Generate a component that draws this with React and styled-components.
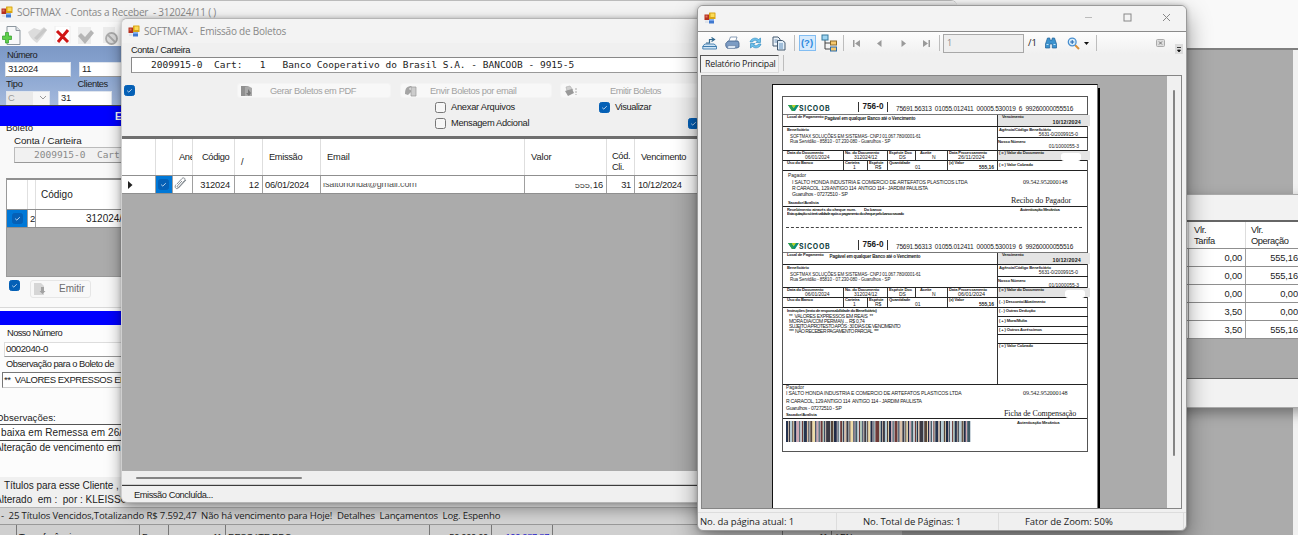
import React from "react";
import styled, { createGlobalStyle, css } from "styled-components";

const Global = createGlobalStyle`
  * { box-sizing: border-box; }
  body { margin: 0; background: #ababab; }
`;

const sans = `"Liberation Sans", Arial, sans-serif`;
const ui = `"Open Sans", "Noto Sans", sans-serif`;
const mono = `"DejaVu Sans Mono", monospace`;
const serif = `"Liberation Serif", serif`;

/* ---------- shared parts ---------- */
const Desktop = styled.div`
  position: relative; width: 1298px; height: 535px; overflow: hidden;
  background: #ababab; font-family: ${sans}; color: #1c1c1c;
`;
const T = styled.div`
  white-space: pre; flex: none;
  font-family: ${(p) => p.$f || sans};
  font-size: ${(p) => p.$s || 9.3}px;
  font-weight: ${(p) => (p.$b ? 700 : 400)};
  line-height: ${(p) => p.$h || 12}px;
  height: ${(p) => p.$h || 12}px;
  letter-spacing: ${(p) => p.$ls ?? (p.$f || p.$s ? 0 : -0.3)}px;
  margin: ${(p) => p.$mt || 0}px ${(p) => p.$mr || 0}px 0 ${(p) => p.$x || 0}px;
  color: ${(p) => p.$c || "inherit"};
  text-align: ${(p) => p.$a || "left"};
`;
const Line = styled.div`
  display: flex; flex: none; align-items: ${(p) => p.$al || "center"};
  height: ${(p) => p.$h}px; margin-top: ${(p) => p.$mt || 0}px;
  padding-left: ${(p) => p.$x || 0}px; gap: ${(p) => p.$gap || 0}px;
`;
const Window = styled.section`
  position: absolute; display: flex; flex-direction: column; overflow: hidden;
  background: #f0f0f0;
`;
const Check = styled.span`
  flex: none; display: flex; width: 11px; height: 11px; border-radius: 2.5px;
  margin: ${(p) => p.$mt || 0}px 0 0 ${(p) => p.$x || 0}px;
  background: ${(p) => (p.$on ? "#0560b6" : "#f6f6f6")};
  border: 1px solid ${(p) => (p.$on ? "#0560b6" : "#777")};
`;
const Tick = (p) => (
  <Check $on {...p}>
    <svg width="9" height="9" viewBox="0 0 9 9"><path d="M2.2 4.7 3.8 6.1 6.8 3.2" fill="none" stroke="#c9def2" strokeWidth=".9" /></svg>
  </Check>
);
const AppIcon = () => (
  <svg width="12" height="12" viewBox="0 0 12 12">
    <rect x=".5" y="2.5" width="5" height="5.500" fill="#b5301f" /><rect x="1.5" y="3.5" width="2" height="2" fill="#e0735c" />
    <rect x="5" y="0.5" width="6.5" height="6.5" rx=".5" fill="#d9a514" /><rect x="6.5" y="1.5" width="4" height="3.5" fill="#fbdc58" />
    <rect x="5" y="7.5" width="5" height="4" fill="#3f78cf" /><rect x="5" y="7.5" width="5" height="1.3" fill="#83aef0" />
    <rect x="1" y="8.5" width="3.5" height="2.5" fill="#dfe3ea" />
  </svg>
);

/* ---------- outer frame behind the windows ---------- */
const ShellTop = styled.div`
  height: 50px; background: #f9f9f9; border-bottom: 2px solid #808080;
`;
const ShellScroll = styled.div`
  margin-left: auto; width: 5px; height: 485px; background: #f1f1f1;
`;
const LowerGrid = styled.div`
  position: absolute; left: 0; top: 524px; width: 902px; height: 11px; overflow: hidden;
  display: flex; background: #cfcfcf; border-top: 1px solid #999;
`;
const LowerCell = styled.div`
  flex: none; width: ${(p) => p.$w}px; border-right: 1px solid #777;
  overflow: hidden; display: flex; justify-content: ${(p) => (p.$r ? "flex-end" : "flex-start")};
`;

/* ---------- Contas a Receber ---------- */
const MainWindow = styled(Window)`
  left: 0; top: 0; width: 957px; height: 525px; background: #fcfcfc;
  border-radius: 0 6px 0 0; border-top: 1px solid #bbb;
`;
const TitleRow = styled.div`
  display: flex; align-items: center; flex: none; height: ${(p) => p.$h}px;
  padding-left: ${(p) => p.$x}px; gap: 4px; background: #f3f3f3; color: #888;
`;
const MainTools = styled.div`
  flex: none; height: 23px; background: #fafafa; padding-left: 2px; display: flex; align-items: flex-end;
`;
const BlueForm = styled.div`
  flex: none; height: 60px; overflow: hidden; border-bottom: 1px solid #444;
  background: linear-gradient(#7c98c6, #88a4d0 40%, #a4b9dc);
`;
const Field = styled.div`
  display: flex; align-items: center; flex: none; overflow: hidden;
  width: ${(p) => p.$w}px; height: ${(p) => p.$h || 15}px; padding-left: ${(p) => p.$p ?? 3}px;
  margin-left: ${(p) => p.$x || 0}px;
  background: ${(p) => p.$bg || "#fff"}; border: 1px solid ${(p) => p.$bc || "#dfe5ee"};
  border-bottom-color: ${(p) => p.$bb || "#999"};
`;
const BlueBar = styled.div`
  flex: none; height: ${(p) => p.$h}px; background: #0000ff; padding: 5px 0 0 115px;
`;
const BoletoPanel = styled.div`
  flex: none; height: 182px; margin-bottom: 3px; overflow: hidden; background: #f9f9f9; border-bottom: 1px solid #d9d9d9;
`;
const SmallGrid = styled.div`
  width: 200px; height: 99px; margin: 15px 0 0 6px; background: #ababab; border: 1px solid #999; border-top: 2px solid #909090;
`;
const GridRow = styled.div`
  display: flex; height: ${(p) => p.$h}px; background: #fff; border-bottom: 1px solid #8f8f8f;
`;
const GridCell = styled.div`
  flex: none; display: flex; align-items: ${(p) => p.$al || "center"}; overflow: hidden;
  width: ${(p) => p.$w}px; padding: ${(p) => p.$p || "0 0 0 5px"};
  justify-content: ${(p) => (p.$r ? "flex-end" : "flex-start")};
  border-right: 1px solid ${(p) => p.$bc || "#a0a0a0"};
  background: ${(p) => p.$bg || "transparent"};
`;
const SoftButton = styled.div`
  flex: none; display: flex; align-items: center; width: ${(p) => p.$w}px; height: ${(p) => p.$h || 15}px;
  margin-left: ${(p) => p.$x || 0}px; padding-left: 3px;
  background: #f8f8f8; border: 1px solid ${(p) => p.$bc || "#f4f4f4"}; border-radius: 3px; color: ${(p) => p.$c || "#a2a2a2"};
`;
const NotesBox = styled.div`
  flex: none; height: 17px; border-top: 1px solid #555; border-bottom: 1px solid #444; background: #fff;
`;
const FooterInfo = styled.div`flex: none; height: 30px; background: #f0f0f0; padding-top: 3px;`;
const MainStatus = styled.div`
  flex: 1; background: #d4d4d4; border-top: 1px solid #b5b5b5; border-bottom: 1px solid #999; padding-top: 1px;
`;

/* ---------- Emissão de Boletos ---------- */
const EmitWindow = styled(Window)`
  left: 121px; top: 18px; width: 640px; height: 485px; border-radius: 6px; border: 1px solid #b5b5b5; border-left-color: #cfcfcf;
  box-shadow: 0 6px 16px rgba(0, 0, 0, 0.38), 0 0 4px rgba(0, 0, 0, 0.2);
`;
const EmitGrid = styled.div`
  flex: none; height: 350px; display: flex; flex-direction: column; background: #ababab;
  border-top: 3px solid #6f6f6f; border-left: 1px solid #222; border-bottom: 1px solid #3c3c3c; margin-left: -1px;
`;
const HScroll = styled.div`
  margin-top: auto; height: 14px; background: #efefef; padding: 6px 0 0 14px; border-bottom: 1px solid #ccc;
`;
const HThumb = styled.div`width: 166px; height: 2px; border-radius: 1px; background: #858585;`;
const Masked = styled.div`height: 6px; overflow: hidden; opacity: 0.8; display: flex;`;
const HalfMask = styled.div`height: 5px; overflow: hidden; margin-top: 3px; opacity: 0.8;`;

const emitCols = [
  [34], [17], [20, "Ane", 6], [42, "Código", 9], [28, "/", 6, "10px 0 0"], [58, "Emissão", 6],
  [204, "Email", 6], [82, "Valor", 6], [28, "Cód.\nCli.", 5, "12px 0 0"], [80, "Vencimento", 6],
];

/* ---------- Títulos grid on the right ---------- */
const FeesWindow = styled(Window)`
  left: 1000px; top: 194px; width: 320px; height: 214px; background: #f2f2f2; border: 1px solid #aaa;
  box-shadow: 0 5px 12px rgba(0, 0, 0, 0.35); padding: 25px 0 28px 180px;
`;
const FeesGrid = styled.div`
  flex: 1; background: #ababab; border-top: 2px solid #666; border-bottom: 1px solid #666;
`;

/* ---------- report viewer ---------- */
const ReportWindow = styled(Window)`
  left: 697px; top: 5px; width: 490px; height: 526px; border-radius: 6px; border: 1px solid #9a9a9a;
  box-shadow: 0 10px 24px rgba(0, 0, 0, 0.42), 0 0 5px rgba(0, 0, 0, 0.25);
`;
const ReportTitle = styled.div`
  flex: none; display: flex; align-items: center; height: 26px; padding: 0 15px 2px 6px;
  background: #f3f3f3; border-bottom: 1px solid #8b8b8b;
`;
const Caption = styled.div`display: flex; gap: 30px; margin-left: auto;`;
const ReportTools = styled.div`
  flex: none; display: flex; align-items: center; height: 22px; padding-left: 4px; background: linear-gradient(#fdfdfd, #f0f0f0);
`;
const Slot = styled.span`
  flex: none; display: flex; justify-content: center; align-items: center; width: ${(p) => p.$w}px; height: 20px;
  margin-left: ${(p) => p.$x || 0}px;
`;
const Sep = styled.span`flex: none; width: 1px; height: 16px; background: #bdbdbd; margin: 0 ${(p) => p.$m ?? 3}px;`;
const PageBox = styled.div`
  flex: none; width: 81px; height: 19px; background: #efefef; border: 1px solid #a8a8a8; margin-left: 3px; padding: 0 0 0 3px;
`;
const Overflow = styled.span`
  flex: none; align-self: flex-end; display: flex; width: 8px; height: 10px; margin-left: 10px; background: #dcdcdc;
`;
const TabRow = styled.div`flex: none; display: flex; height: 21px; padding: 1px 0 0 2px;`;
const Tab = styled.div`
  width: 79px; height: 18px; border: 1px solid #dcdcdc; border-top-color: #555; border-left-color: #555; background: #f3f3f3;
  padding: 1px 0 0 4px; margin-right: 4px;
`;
const Viewer = styled.div`
  flex: none; display: flex; width: 481px; height: 434px; margin: 0 0 3px 3px; background: #ababab;
  border: 1px solid #858585; padding-left: 70px; overflow: hidden;
`;
const Paper = styled.div`
  width: 326px; height: 430px; margin-top: 8px; background: #fff; border-left: 1px solid #111; border-top: 1px solid #111;
  border-right: 1px solid #777; box-shadow: 2px 4px 0 #000; padding: 11px 0 0 9px;
`;
const VScroll = styled.div`margin-left: auto; width: 14px; background: #f0f0f0; padding: 14px 0 0 6px;`;
const VThumb = styled.div`width: 2px; height: 366px; border-radius: 1px; background: #858585;`;
const ReportStatus = styled.div`
  flex: 1; display: flex; border-top: 1px solid #ddd; 
`;
const StatusCell = styled.div`width: ${(p) => p.$w}px; padding: 1px 0 0 ${(p) => p.$p}px; border-right: 1px solid #ddd;`;

/* ---------- payment slip ---------- */
const Slip = styled.div`
  width: 306px; height: 356px; border: 1px solid #555; display: flex; flex-direction: column; color: #1a1a1a;
`;
const SlipHead = styled.div`
  flex: none; display: flex; align-items: flex-end; height: ${(p) => p.$h}px; border-bottom: 1px solid #777; padding: 0 0 2px 5px;
`;
const LogoName = styled.div`width: 59px;`;
const BankCode = styled.div`
  width: 30px; height: 10px; border-left: 1px solid #333; border-right: 1px solid #333; display: flex;
  justify-content: center; padding-top: 1px;
`;
const SlipRow = styled.div`
  flex: none; display: flex; height: ${(p) => p.$h}px; border-bottom: 1px solid #222;
`;
const Cell = styled.div`
  flex: none; width: ${(p) => p.$w}px; height: ${(p) => (p.$ch ? p.$ch + "px" : "auto")};
  padding-left: ${(p) => p.$p ?? 1}px; overflow: ${(p) => (p.$v ? "visible" : "hidden")};
  ${(p) => p.$l && css`border-left: 1px solid #333;`}
  ${(p) => p.$bb && css`border-bottom: 1px solid #222;`}
  ${(p) => p.$g && css`background: #e4e4e4;`}
`;
const Cut = styled.div`flex: none; height: 1px; margin: 11px 5px 0 3px; border-top: 1px dashed #444;`;
const Blank = styled.div`width: ${(p) => p.$w}px; height: 8px; margin: -2px 0 0 ${(p) => p.$x}px; background: #fff; border-radius: 3px;`;

const Tiny = ({ children, ...p }) => <T $s={4.1} $b $h={4} $ls={-0.14} {...p}>{children}</T>;
const Val = ({ children, ...p }) => <T $s={5} $h={5} $ls={-0.05} {...p}>{children}</T>;

const Sicoob = () => (
  <svg width="11" height="8" viewBox="0 0 11 8">
    <path d="M0 1h4l1.500 3L7 1h4L7 7H4z" fill="#0b8f7a" /><path d="M3.500 1H8L5.700 4.600z" fill="#b5cf2a" /><path d="M0 1h3l3 6H4z" fill="#2f9d4c" />
  </svg>
);
const Head = ({ h }) => (
  <SlipHead $h={h}>
    <Sicoob />
    <LogoName><T $s={7} $b $h={7} $ls={0.7} $c="#13433f" $f={`Inter, ${sans}`}>SICOOB</T></LogoName>
    <BankCode><T $s={8.2} $b $h={8} $ls={0}>756-0</T></BankCode>
    <T $s={6.5} $h={7} $x={8} $ls={-0.21}>75691.56313  01055.012411  00005.530019  6  99260000055516</T>
  </SlipHead>
);
const Beneficiary = ({ h2, x, split, third, last }) => (
  <>
    <SlipRow $h={12}>
      <Cell $w={214} $p={4}>
        <Line $h={8} $al="flex-start">
          <Tiny $ls={-0.18}>Local de Pagamento</Tiny>
          <T $s={4.5} $b $h={6} $ls={-0.18} $x={x} $mt={1}>Pagável em qualquer Banco até o Vencimento</T>
        </Line>
      </Cell>
      <Cell $w={93} $l $g $v $p={4}>
        <Tiny>Vencimento</Tiny>
        <T $s={5.4} $b $h={6} $a="right" $mr={9} $ls={0.15}>10/12/2024</T>
      </Cell>
    </SlipRow>
    <SlipRow $h={h2}>
      <Cell $w={214} $p={4}>
        <Tiny $mt={1}>Beneficiário</Tiny>
        <T $s={4.5} $h={5} $mt={1.5} $x={3} $ls={-0.1}>SOFTMAX SOLUÇÕES EM SISTEMAS- CNPJ 01.067.780/0001-61</T>
        <T $s={4.5} $h={5} $x={3} $ls={-0.1}>Rua Servidão - 85810 - 07.230-080 - Guarulhos - SP</T>
      </Cell>
      <Cell $w={91} $l $p={0}>
        <Cell $ch={split} $w={91} $bb>
          <Tiny $mt={1}>Agência/Código Beneficiário</Tiny>
          <Val $s={4.9} $h={5} $a="right" $mr={11}>5631-0/2009915-0</Val>
        </Cell>
        <Tiny $mt={1.5}>Nosso Número</Tiny>
        <Val $a="right" $mr={9}>01/1000055-3</Val>
      </Cell>
    </SlipRow>
    <SlipRow $h={10}>
      <Cell $w={60} $p={4}><Tiny>Data do Documento</Tiny><Val $x={18}>06/01/2024</Val></Cell>
      <Cell $w={44} $l><Tiny>No. do Documento</Tiny><Val $x={9}>312024/12</Val></Cell>
      <Cell $w={28} $l><Tiny>Espécie Doc</Tiny><Val $x={10}>DS</Val></Cell>
      <Cell $w={32} $l $p={4}><Tiny>Aceite</Tiny><Val $x={12}>N</Val></Cell>
      <Cell $w={50} $l><Tiny>Data Processamento</Tiny><Val $x={9} $s={5.5}>{third}</Val></Cell>
      <Cell $w={93} $l $g $v><Tiny>( = ) Valor do Documento</Tiny><Blank $w={20} $x={last ? 66 : 62} /></Cell>
    </SlipRow>
    <SlipRow $h={10}>
      <Cell $w={60} $p={4}><Tiny>Uso do Banco</Tiny></Cell>
      <Cell $w={24} $l><Tiny>Carteira</Tiny><Val $x={8}>1</Val></Cell>
      <Cell $w={20} $l><Tiny>Espécie</Tiny><Val $x={6}>R$</Val></Cell>
      <Cell $w={60} $l><Tiny>Quantidade</Tiny><Val $x={26}>01</Val></Cell>
      <Cell $w={50} $l><Tiny>(x) Valor</Tiny><Val $b $a="right" $mr={3}>555,16</Val></Cell>
      <Cell $w={91} $l><Tiny $mt={1.5}>{last ? "( - ) Desconto/Abatimento" : "( = ) Valor Cobrado"}</Tiny></Cell>
    </SlipRow>
  </>
);
const Cnpj = (p) => <T $f={serif} $s={6.1} $h={6} $ls={-0.08} {...p}>09.542.952000148</T>;
const Address = ({ x, g1, g2 }) => (
  <>
    <T $s={5.1} $h={6} $x={x} $mt={g1 ? 0 : 1} $ls={-0.15}>I SALTO HONDA INDUSTRIA E COMERCIO DE ARTEFATOS PLASTICOS LTDA</T>
    <T $s={5.1} $h={6} $x={x} $mt={g1} $ls={-0.29}>R CARACOL, 129 ANTIGO 114  ANTIGO 114 - JARDIM PAULISTA</T>
    <T $s={5.1} $h={6} $x={x} $mt={g2} $ls={-0.26}>Guarulhos - 07272510 - SP</T>
  </>
);

const stripes = "2113112412113211241311221141213112211321141122131121132111421123112211311421121322111241311212113214112113122114112231".split("");
const tones = ["#26334e", "#d9c0a8", "#3b3a44", "#b5cdd6", "#55443a", "#efdca8", "#1f2b47", "#cfa9b4", "#3f5a66", "#d5dfe6", "#6d3a38", "#aac4b8"];
const Barcode = () => {
  const widths = stripes.map((s, i) => (i % 2 ? +s * 0.75 : +s + 0.4));
  const total = widths.reduce((a, b) => a + b, 0);
  let x = 0;
  return (
    <svg width="185" height="21" viewBox={`0 0 ${total} 20`} preserveAspectRatio="none">
      {widths.map((w, i) => {
        const r = <rect key={i} x={x} y="0" width={w + 0.05} height="20" fill={tones[i % 12]} />;
        x += w;
        return r;
      })}
    </svg>
  );
};

const PaymentSlip = () => (
  <Slip>
    <Head h={18} />
    <Beneficiary h2={24} x={1} split={11} third="26/11/2024" />
    <SlipRow $h={36}>
      <Cell $w={226} $p={5}>
        <T $s={4.8} $h={5} $mt={1.5}>Pagador</T>
        <Address x={4} />
        <Tiny $mt={4}>Sacador/Avalista</Tiny>
      </Cell>
      <Cell $w={78} $p={2}>
        <Cnpj $mt={8} $x={12} />
        <T $f={serif} $s={8} $h={10} $mt={11} $ls={-0.05}>Recibo do Pagador</T>
      </Cell>
    </SlipRow>
    <Line $h={8} $al="flex-start" $x={4} $mt={1}>
      <Cell $w={233} $p={0}>
        <Tiny>{"Recebimento através do cheque num.        Do banco"}</Tiny>
        <Tiny $ls={-0.52}>Esta quitação só terá validade após o pagamento do cheque pelo banco sacado</Tiny>
      </Cell>
      <Tiny $ls={-0.28}>Autenticação Mecânica</Tiny>
    </Line>
    <Cut />
    <Head h={25} />
    <Beneficiary h2={23} x={6} split={12} third="06/01/2024" last />
    <SlipRow $h={77}>
      <Cell $w={214} $p={4}>
        <Tiny $mt={1} $ls={-0.3}>Instruções (texto de responsabilidade do Beneficiário)</Tiny>
        <Val $x={2} $mt={1} $ls={-0.3}>**  VALORES EXPRESSOS EM REAIS  **</Val>
        <Val $x={2} $ls={-0.3}>MORA DIA/COM PERMAN ... R$ 0,74</Val>
        <Val $x={2} $ls={-0.5}>SUJEITO A PROTESTO APÓS : 30 DIAS DE VENCIMENTO</Val>
        <Val $x={2} $ls={-0.5}>***  NÃO RECEBER PAGAMENTO PARCIAL  ***</Val>
      </Cell>
      <Cell $w={91} $l $p={0}>
        <Cell $ch={9} $w={91} $bb><Tiny $mt={1}>( - ) Outras Dedução</Tiny></Cell>
        <Cell $ch={10} $w={91} $bb><Tiny $mt={2}>( + ) Mora/Multa</Tiny></Cell>
        <Cell $ch={8} $w={91} $bb><Tiny $mt={1}>( + ) Outros Acréscimos</Tiny></Cell>
        <Cell $ch={9} $w={91} $bb />
        <Tiny $mt={0} $x={1}>( = ) Valor Cobrado</Tiny>
      </Cell>
    </SlipRow>
    <SlipRow $h={34}>
      <Cell $w={220} $p={3}>
        <T $s={4.8} $h={5}>Pagador</T>
        <Address x={0} g1={2} g2={1} />
        <Tiny $mt={2}>Sacador/Avalista</Tiny>
      </Cell>
      <Cell $w={84} $p={1}>
        <Cnpj $mt={5} $x={19} />
        <T $f={serif} $s={8} $h={10} $mt={13} $ls={-0.1}>Ficha de Compensação</T>
      </Cell>
    </SlipRow>
    <Line $h={24} $al="flex-start" $x={3} $mt={2}>
      <Barcode />
      <Tiny $x={46} $mt={0}>Autenticação Mecânica</Tiny>
    </Line>
  </Slip>
);

/* ---------- icons ---------- */
const NewDoc = () => (<svg width="20" height="21" viewBox="0 0 20 21"><path d="M5 1.500h9l4 4v14H5z" fill="#f7f8f9" stroke="#8d979f" /><path d="M14 1.500v4h4" fill="#dfe3e6" stroke="#8d979f" /><path d="M3.500 7.500h3v3.500h3v3.500h-3V18h-3v-3.500h-3V11h3z" fill="#5fcf4a" stroke="#2f9a2a" strokeWidth=".7" /></svg>);
const Pencil = () => (<svg width="20" height="21" viewBox="0 0 20 21"><path d="M1 7 7 3l6 2 4-3 3 3-4 6-6 7c-3-2-7-5-9-11z" fill="#dcdcdc" /><path d="M7 13 17 3l3 2L10 15z" fill="#c8c8c8" /></svg>);
const Cross = () => (<svg width="17" height="18" viewBox="0 0 17 18"><rect x="1" width="15" height="17" fill="#fff" stroke="#eee" /><path d="m3 5 11 11M14 4 4 16" stroke="#d01616" strokeWidth="3" /></svg>);
const GreyCheck = () => (<svg width="18" height="21" viewBox="0 0 18 21"><rect x="1" y="2" width="13" height="17" fill="#ececec" /><path d="m1 11 3-3 4 4 6-7 3 3-9 11z" fill="#b5b5b5" /></svg>);
const Ban = () => (<svg width="17" height="21" viewBox="0 0 17 21"><rect x="1" y="2" width="12" height="16" fill="#ececec" /><circle cx="9.500" cy="13.500" r="5.500" fill="#ddd" stroke="#ababab" strokeWidth="1.800" /><path d="m6 10 7 7" stroke="#ababab" strokeWidth="1.800" /></svg>);
const GreyDoc = () => (<svg width="11" height="12" viewBox="0 0 11 12"><path d="M0 1h7v10H0z" fill="#909090" /><path d="M4 2l3-1 4 2v8H4z" fill="#a9a9a9" /><path d="M7 4v4H5l3 3 2-3" fill="#777" /></svg>);
const LightDoc = () => (<svg width="12" height="12" viewBox="0 0 12 12"><path d="M0 0h7l3 3v9H0z" fill="#d6d6d6" /><path d="M7 4h3v4h1.500L8.500 11 5.500 8H7z" fill="#a2a2a2" /></svg>);
const MailDoc = () => (<svg width="13" height="12" viewBox="0 0 13 12"><path d="M1 9C1 3 3 1 8 1L5 4l3 2-4 4z" fill="#a5a5a5" /><path d="M7 2h5v9H7z" fill="#ccc" stroke="#999" strokeWidth=".7" /></svg>);
const GreyPrint = () => (<svg width="13" height="12" viewBox="0 0 13 12"><path d="M2 2 6 1l3 4-6 1z" fill="#d0d0d0" stroke="#aaa" strokeWidth=".6" /><path d="m1 6 7-2 2 4-6 3z" fill="#999" /><path d="M12 3v7" stroke="#aaa" strokeDasharray="2 1" /></svg>);
const Clip = () => (<svg width="14" height="15" viewBox="0 0 14 15"><path d="m3 8 5-5.500c1.500-1.500 4 0 2.500 2L5 11c-1 1-2.500 0-1.500-1.200L8 5M2 8.500C0 11 2 14 4.500 12L12 4" fill="none" stroke="#777f86" strokeWidth=".9" /></svg>);
const Export = () => (<svg width="15" height="14" viewBox="0 0 15 14"><path d="M3 8h9l2.500 2v3H.8v-3z" fill="#cfe4f4" stroke="#3e7cae" strokeWidth=".9" /><path d="M1 10.500h13" stroke="#3e7cae" /><path d="M4 7h3.500V3.500h4M9.500 1.500l3 2-3 2" fill="none" stroke="#33698f" strokeWidth="1.200" /></svg>);
const Printer = () => (<svg width="15" height="14" viewBox="0 0 15 14"><path d="M5.500 1H12l-1.500 5H3.500z" fill="#fff" stroke="#6c86a5" strokeWidth=".8" /><path d="M3 5h10l1 2v4l-2 1H2L.8 10V7.500z" fill="#7c9cc4" stroke="#3f5f8a" strokeWidth=".8" /><path d="M3 9.500h8l-1 3H2.500z" fill="#dbe7f4" stroke="#5f7ba0" strokeWidth=".6" /></svg>);
const Refresh = () => (<svg width="13" height="14" viewBox="0 0 13 14"><path d="M1 6C2 2 7 1 9.500 3.500L11.500 2v4.500H7L8.500 5C6 3.500 4 4.500 3.500 6z" fill="#6fc1ea" stroke="#2383bd" strokeWidth=".6" /><path d="M12 8c-1 4-6 5-8.500 2.500L1.500 12V7.500H6L4.500 9c2.500 1.500 4.500.5 5-1z" fill="#6fc1ea" stroke="#2383bd" strokeWidth=".6" /></svg>);
const Copy = () => (<svg width="14" height="15" viewBox="0 0 14 15"><path d="M1 1h5l2 2v7H1z" fill="#eef4fa" stroke="#445a70" /><path d="M2.500 4h3M2.500 6h4" stroke="#6b8fb5" /><path d="M5.500 4.500h5l2.500 2V14H5.500z" fill="#e2eef8" stroke="#445a70" /><path d="M7 8h4M7 10h4M7 12h4" stroke="#5f8fbd" /></svg>);
const Help = styled.span`
  display: flex; justify-content: center; width: 17px; height: 16px; background: #d6eafc; border: 1px solid #82bdf2;
`;
const Tree = () => (<svg width="17" height="18" viewBox="0 0 17 18"><path d="M4 6v9h5M4 9h5" fill="none" stroke="#444" /><rect x="1" y="1" width="6" height="5" fill="#9ed5f2" stroke="#35789c" /><rect x="9.500" y="7" width="6" height="4" fill="#f6c86d" stroke="#8b6a2a" /><rect x="9.500" y="13" width="6" height="4" fill="#f6c86d" stroke="#2d6da8" /></svg>);
const Nav = ({ d }) => (<svg width="9" height="9" viewBox="0 0 9 9"><path d={d} fill="#9a9a9a" /></svg>);
const Binoculars = () => (<svg width="12" height="12" viewBox="0 0 12 12"><path d="M2.500 1h2.300v2h2.400V1h2.300L11.500 7v4H7.300V7H4.700v4H.5V7z" fill="#3c93cf" stroke="#1d5f96" strokeWidth=".7" /><path d="M1.500 7.500h2M8.500 7.500h2" stroke="#bfe2f7" /></svg>);
const Magnify = () => (<svg width="13" height="13" viewBox="0 0 13 13"><path d="m8 8 4 4" stroke="#d98f36" strokeWidth="2" /><circle cx="5.200" cy="5" r="3.900" fill="#d8eefb" stroke="#4b8fcf" strokeWidth="1.300" /><path d="M3.200 5h4M5.200 3v4" stroke="#1c62b0" /></svg>);

const EmitRow = () => (
  <GridRow $h={18}>
    <GridCell $w={34} $p="0 0 0 6px"><svg width="5" height="8"><path d="M0 0 4.500 4 0 8z" fill="#222" /></svg></GridCell>
    <GridCell $w={17} $bg="#0078d7" $p="0 0 0 2px"><Tick /></GridCell>
    <GridCell $w={20} $p="0 0 3px 1px"><Clip /></GridCell>
    <GridCell $w={42} $r $p="0 4px 0 0"><T $ls={-0.2}>312024</T></GridCell>
    <GridCell $w={28} $r $p="0 3px 0 0"><T $ls={-0.1}>12</T></GridCell>
    <GridCell $w={58} $p="0 0 0 2px"><T $ls={-0.25}>06/01/2024</T></GridCell>
    <GridCell $w={204} $al="flex-end" $p="0 0 4px 2px">
      <Masked><T $s={9} $h={9} $mt={-3} $ls={-0.12}>isaltohonda@gmail.com</T></Masked>
    </GridCell>
    <GridCell $w={82} $r $p="0 3px 0 0"><HalfMask><T $h={12} $mt={-5} $ls={-0.2}>555,</T></HalfMask><T $x={1} $ls={-0.2}>16</T></GridCell>
    <GridCell $w={28} $r $p="0 3px 0 0"><T>31</T></GridCell>
    <GridCell $w={80} $p="0 0 0 3px"><T>10/12/2024</T></GridCell>
  </GridRow>
);

export default function App() {
  return (
    <Desktop>
      <Global />
      <ShellTop />
      <ShellScroll />

      <MainWindow>
        <TitleRow $h={21} $x={1}><AppIcon /><T $f={ui} $s={10} $h={14} $ls={-0.22}>{"SOFTMAX  - Contas a Receber  - 312024/11 ( )"}</T></TitleRow>
        <MainTools>
          <Slot $w={20}><NewDoc /></Slot><Slot $w={30}><Pencil /></Slot><Slot $w={21}><Cross /></Slot><Slot $w={25}><GreyCheck /></Slot><Slot $w={25}><Ban /></Slot>
        </MainTools>
        <Line $h={1} />
        <BlueForm>
          <T $x={7} $mt={3} $ls={-0.5}>Número</T>
          <Line $h={16} $gap={8} $x={5}><Field $w={66} $p={2}><T $s={9.5} $ls={-0.3}>312024</T></Field><Field $w={66} $p={2}><T>11</T></Field></Line>
          <Line $h={13}><T $x={6}>Tipo</T><T $x={55} $ls={-0.42}>Clientes</T></Line>
          <Line $h={16} $x={6} $gap={8}>
            <Field $w={44} $h={15} $p={1} $bg="linear-gradient(90deg,#e9e9e9 62%,#f7f7f7 62%)">
              <T $c="#999">C</T>
              <svg width="8" height="6" style={{ marginLeft: 25 }}><path d="m1 1 3 3 3-3" fill="none" stroke="#999" /></svg>
            </Field>
            <Field $w={54} $p={2}><T $ls={-0.1}>31</T></Field>
          </Line>
        </BlueForm>
        <BlueBar $h={20}><T $b $c="#fff" $s={10}>Emissão</T></BlueBar>
        <BoletoPanel>
          <T $x={6} $mt={-4} $h={11} $s={9.5}>Boleto</T>
          <T $x={14} $mt={2} $s={9.8} $ls={-0.1}>Conta / Carteira</T>
          <Line $h={16} $mt={0} $x={14}><Field $w={190} $h={16} $bg="#f1f1f1" $bc="#bbb" $p={19}><T $f={mono} $s={9.5} $c="#8a8a8a">2009915-0  Cart:</T></Field></Line>
          <SmallGrid>
            <GridRow $h={30}>
              <GridCell $w={21} $bc="#e0e0e0" /><GridCell $w={8} $bc="#e0e0e0" /><GridCell $w={110}><T $s={10}>Código</T></GridCell>
            </GridRow>
            <GridRow $h={18}>
              <GridCell $w={21} $bg="#0078d7"><Tick /></GridCell><GridCell $w={8} $p="0 0 0 2px"><T $s={9.5}>2</T></GridCell>
              <GridCell $w={110} $p="0 0 0 50px"><T $s={10}>312024/</T></GridCell>
            </GridRow>
          </SmallGrid>
          <Line $h={21} $mt={3} $x={9} $al="flex-start">
            <Tick />
            <SoftButton $w={61} $h={18} $x={10} $bc="#e6e6e6" $c="#6c6c6c"><LightDoc /><T $s={10} $x={13}>Emitir</T></SoftButton>
          </Line>
        </BoletoPanel>
        <BlueBar $h={14} />
        <T $x={7} $mt={2} $ls={-0.58}>Nosso Número</T>
        <Line $h={16} $mt={2} $x={4}><Field $w={190} $p={1} $bc="#ddd"><T $s={9.5} $ls={-0.4}>0002040-0</T></Field></Line>
        <T $x={6} $mt={1} $ls={-0.48}>Observação para o Boleto de</T>
        <Line $h={16} $mt={2} $x={2}><Field $w={190} $h={16} $bc="#777" $bb="#ccc" $p={1}><T $s={9.5} $ls={-0.48}>{"**  VALORES EXPRESSOS EM"}</T></Field></Line>
        <T $x={-4} $mt={24} $s={9.7}>Observações:</T>
        <NotesBox><T $x={1} $mt={2} $s={10} $ls={0.1}>baixa em Remessa em 26/</T></NotesBox>
        <T $x={-5} $mt={1} $s={10} $ls={-0.05}>Alteração de vencimento em</T>
        <Line $h={23} />
        <FooterInfo><T $x={4} $s={10} $ls={-0.05}>Títulos para esse Cliente ,</T><T $x={-5} $mt={2} $s={10}>{"Alterado  em :  por : KLEISSON"}</T></FooterInfo>
        <MainStatus><T $f={ui} $s={9.6} $h={14} $x={1} $ls={-0.16}>{"-  25 Títulos Vencidos,Totalizando R$ 7.592,47  Não há vencimento para Hoje!  Detalhes  Lançamentos  Log. Espenho"}</T></MainStatus>
      </MainWindow>

      <LowerGrid>
        <LowerCell $w={17} />
        <LowerCell $w={123}><T $x={2} $mt={6} $s={9.500}>Transferência</T></LowerCell>
        <LowerCell $w={29}><T $x={2} $mt={6}>Banco</T></LowerCell>
        <LowerCell $w={57} $r><T $mt={6} $mr={3}>11</T></LowerCell>
        <LowerCell $w={204}><T $x={2} $mt={6}>RESGATE RDC</T></LowerCell>
        <LowerCell $w={62} $r><T $mt={6} $mr={3}>50.000,00</T></LowerCell>
        <LowerCell $w={61} $r><T $mt={6} $mr={3} $c="#2a22c9">100.287,87</T></LowerCell>
        <LowerCell $w={230} />
        <LowerCell $w={49} $r><T $mt={6} $mr={3}>11</T></LowerCell>
        <LowerCell $w={105}><T $x={2} $mt={6}>ABN</T></LowerCell>
      </LowerGrid>

      <EmitWindow>
        <TitleRow $h={24} $x={6}><AppIcon /><T $f={ui} $s={10} $h={14} $ls={-0.23}>{"SOFTMAX -   Emissão de Boletos"}</T></TitleRow>
        <T $x={9} $mt={1} $ls={-0.42}>Conta / Carteira</T>
        <Line $h={16} $mt={1} $x={9}><Field $w={630} $h={16} $bc="#888" $p={19}><T $f={mono} $s={9.5}>{"2009915-0  Cart:   1   Banco Cooperativo do Brasil S.A. - BANCOOB - 9915-5"}</T></Field></Line>
        <Line $h={15} $mt={10} $x={2}>
          <Tick />
          <SoftButton $w={154} $x={102}><GreyDoc /><T $x={18} $ls={-0.4}>Gerar Boletos em PDF</T></SoftButton>
          <SoftButton $w={152} $x={9}><MailDoc /><T $x={13} $ls={-0.4}>Envir Boletos por email</T></SoftButton>
          <SoftButton $w={160} $x={8}><GreyPrint /><T $x={33} $ls={-0.45}>Emitir Boletos</T></SoftButton>
        </Line>
        <Line $h={16} $mt={1} $x={313} $gap={5}><Check /><T $ls={-0.25}>Anexar Arquivos</T><Tick $x={79} /><T $ls={-0.4}>Visualizar</T></Line>
        <Line $h={16} $x={313} $gap={5}><Check /><T $ls={-0.33}>Mensagem Adcional</T><Tick $x={154} /></Line>
        <Line $h={5} />
        <EmitGrid>
          <GridRow $h={37}>
            {emitCols.map(([w, label, p, pad], i) => (
              <GridCell key={i} $w={w} $bc="#dedede" $al={label?.includes("\n") ? "flex-start" : "center"} $p={`${pad || "0 0 1px"} ${p || 0}px`}>
                {label && <T $h={label.includes("\n") ? 11 : 12} $ls={i === 6 || i === 7 ? -0.1 : -0.35}>{label}</T>}
              </GridCell>
            ))}
          </GridRow>
          <EmitRow />
          <HScroll><HThumb /></HScroll>
        </EmitGrid>
        <T $x={12} $mt={3} $ls={-0.45}>Emissão Concluída...</T>
      </EmitWindow>

      <FeesWindow>
        <FeesGrid>
          <GridRow $h={27}>
            <GridCell $w={8} $bc="#ddd" /><GridCell $w={57} $al="flex-start" $bc="#ddd" $p="3px 0 0 5px"><T $h={11}>{"Vlr.\nTarifa"}</T></GridCell>
            <GridCell $w={70} $al="flex-start" $p="3px 0 0 5px"><T $h={11} $ls={-0.4}>{"Vlr.\nOperação"}</T></GridCell>
          </GridRow>
          {[["0,00", "555,16"], ["0,00", "555,16"], ["0,00", "0,00"], ["3,50", "0,00"], ["3,50", "555,16"]].map(([a, b], i) => (
            <GridRow key={i} $h={18}>
              <GridCell $w={8} /><GridCell $w={57} $r $p="0 3px 0 0"><T $ls={-0.15}>{a}</T></GridCell>
              <GridCell $w={54} $r $p="0 1px 0 0"><T $ls={-0.1}>{b}</T></GridCell>
            </GridRow>
          ))}
        </FeesGrid>
      </FeesWindow>

      <ReportWindow>
        <ReportTitle>
          <AppIcon />
          <Caption>
            <svg width="9" height="9"><path d="M1 4.500h7" stroke="#bbb" /></svg>
            <svg width="9" height="9"><rect x="1" y="1" width="7" height="7" fill="none" stroke="#888" /></svg>
            <svg width="9" height="9"><path d="m1 1 7 7M8 1 1 8" stroke="#888" /></svg>
          </Caption>
        </ReportTitle>
        <ReportTools>
          <Slot $w={15}><Export /></Slot><Slot $w={31}><Printer /></Slot><Slot $w={15}><Refresh /></Slot><Slot $w={31}><Copy /></Slot>
          <Sep $m={0} />
          <Slot $w={22} $x={1}><Help><T $b $s={9.500} $h={14} $c="#2a87dd">(?)</T></Help></Slot><Slot $w={22}><Tree /></Slot>
          <Sep $m={3} />
          <Slot $w={18}><Nav d="M1 1h1.500v7H1zM8 1v7L3 4.500z" /></Slot><Slot $w={28}><Nav d="M6.500 1v7L2 4.500z" /></Slot>
          <Slot $w={20}><Nav d="M2.500 1v7L7 4.500z" /></Slot><Slot $w={26}><Nav d="M1 1v7l5-3.500zM6.500 1H8v7H6.500z" /></Slot>
          <Sep $m={0} />
          <PageBox><T $f={ui} $s={9} $h={16} $c="#888">1</T></PageBox>
          <T $f={ui} $s={9.5} $x={4}>/1</T>
          <Slot $w={28}><Binoculars /></Slot><Slot $w={18}><Magnify /></Slot>
          <Slot $w={8}><svg width="5" height="3"><path d="M0 0h5L2.500 3z" fill="#111" /></svg></Slot>
          <Sep $m={5} />
          <Slot $w={9} $x={54}><svg width="9" height="8"><rect x=".5" y=".5" width="8" height="7" rx="1" fill="#ddd" stroke="#aaa" /><path d="m3 2.500 3 3M6 2.500l-3 3" stroke="#777" /></svg></Slot>
          <Overflow><svg width="8" height="10"><path d="M2 3.500h4M2.500 6h3L4 8z" fill="#111" stroke="#111" strokeWidth=".8" /></svg></Overflow>
        </ReportTools>
        <TabRow><Tab><T $f={ui} $s={8.8} $h={14} $ls={-0.22}>Relatório Principal</T></Tab><Sep $m={0} /></TabRow>
        <Viewer>
          <Paper><PaymentSlip /></Paper>
          <VScroll><VThumb /></VScroll>
        </Viewer>
        <ReportStatus>
          <StatusCell $w={139} $p={2}><T $f={ui} $s={9.5} $h={16} $ls={-0.1}>No. da página atual: 1</T></StatusCell>
          <StatusCell $w={162} $p={26}><T $f={ui} $s={9.5} $h={16} $ls={-0.1}>No. Total de Páginas: 1</T></StatusCell>
          <StatusCell $w={185} $p={26}><T $f={ui} $s={9.5} $h={16} $ls={-0.05}>Fator de Zoom: 50%</T></StatusCell>
        </ReportStatus>
      </ReportWindow>
    </Desktop>
  );
}
